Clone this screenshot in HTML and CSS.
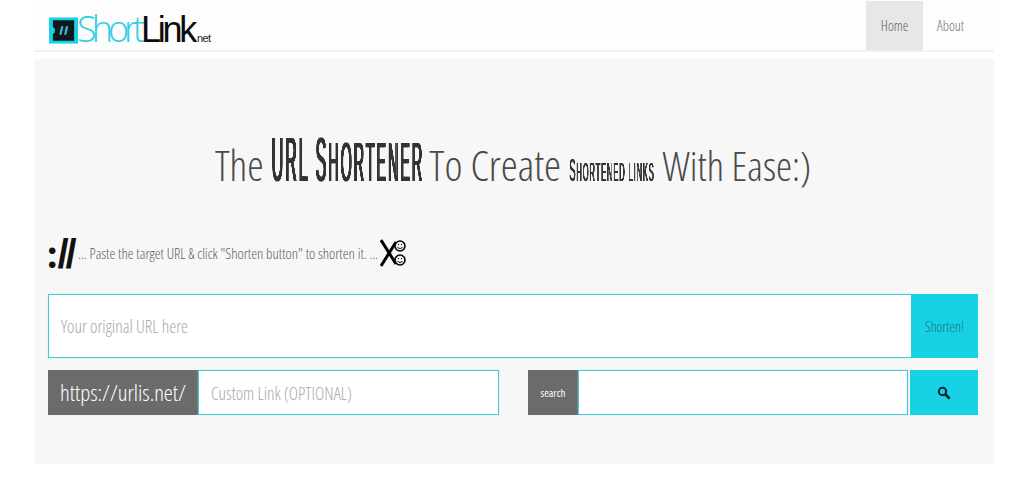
FILE: index.html
```html
<!DOCTYPE html>
<html lang="en">
<head>
<meta charset="utf-8">
<title>ShortLink.net</title>
<link rel="stylesheet" href="styles.css">
</head>
<body>
<div class="page">
  <nav class="nav">
    <a class="brand" href="#">
      <svg class="brand-mark" width="29" height="27" viewBox="0 0 30 27">
        <rect x="0" y="0" width="30" height="27" fill="#16d2e4"/>
        <path d="M4 3H26V24H4V17L6 15.500V11.500L4 10Z" fill="#10181c"/>
        <path d="M10.500 18L12.500 9H15L13 18ZM15.500 18L17.500 9H20L18 18Z" fill="#2fb6c8"/>
      </svg>
      <span class="brand-a">Short</span><span class="brand-b">Link</span><span class="brand-c">net</span>
    </a>
    <ul class="tabs">
      <li class="tab tab-on">Home</li>
      <li class="tab">About</li>
    </ul>
  </nav>
  <main class="jumbo">
    <h1 class="headline"><span class="lite">The</span> <span class="squeeze squeeze-big"><span class="tall">URL S<span class="rest-big">HORTENER</span></span></span> <span class="lite lite-mid">To Create</span> <span class="squeeze squeeze-mini"><span class="mini">S<span class="rest-mini">HORTENED LINKS</span></span></span> <span class="lite lite-end">With Ease:)</span></h1>
    <div class="hint">
      <span class="slashes"><span class="colon">:</span>//</span>
      <span class="hint-text">... Paste the target URL &amp; click "Shorten button" to shorten it. ...</span>
      <svg class="scissors" width="26" height="30" viewBox="0 0 26 30" fill="none" stroke="#000">
        <path d="M1 2L16 26" stroke-width="3"/>
        <path d="M1 28L16 4" stroke-width="3"/>
        <circle cx="20" cy="8" r="5" fill="#eee" stroke-width="1.600"/>
        <circle cx="20" cy="22" r="5" fill="#eee" stroke-width="1.600"/>
        <path d="M17.500 9C18.500 11 21.500 11 22.500 9M17.500 23C18.500 25 21.500 25 22.500 23" stroke-width="1"/>
        <path d="M18 6.500H19M21 6.500H22M18 20.500H19M21 20.500H22" stroke-width="1"/>
      </svg>
    </div>
    <form class="main-form">
      <input class="url-input" type="text" placeholder="Your original URL here">
      <button class="shorten" type="button">Shorten!</button>
    </form>
    <div class="lower">
      <div class="group group-custom">
        <span class="addon addon-url">https://urlis.net/</span>
        <input class="field" type="text" placeholder="Custom Link (OPTIONAL)">
      </div>
      <div class="group group-search">
        <span class="addon addon-search">search</span>
        <input class="field field-search" type="text">
        <button class="go" type="button" aria-label="search">
          <svg width="14" height="14" viewBox="0 0 14 14" fill="none" stroke="#04222c">
            <circle cx="5.500" cy="5.500" r="3.700" stroke-width="2"/>
            <path d="M8.500 8.500L12.700 12.700" stroke-width="2.600"/>
          </svg>
        </button>
      </div>
    </div>
  </main>
</div>
</body>
</html>
```
FILE: styles.css
```css
* { box-sizing: border-box; }
html, body { margin: 0; padding: 0; background: #fff; }
body { font-family: "Open Sans", "Liberation Sans", sans-serif; font-stretch: 75%; font-weight: 300; overflow: hidden; }
.page { width: 960px; margin-left: 34px; }
.nav { height: 52px; display: flex; justify-content: space-between; align-items: flex-end; border-bottom: 2px solid #f1f1f1; background: #fdfdfd; }
.brand { display: flex; align-items: baseline; height: 50px; padding: 15px 0 0 15px; text-decoration: none; font-family: "Liberation Sans", sans-serif; font-size: 36px; line-height: 27px; }
.brand-mark { align-self: flex-start; margin: 2px 0 0 0; }
.brand-a { color: #2ccfe2; font-family: "Open Sans", sans-serif; font-stretch: 100%; font-weight: 300; letter-spacing: -5px; margin-left: -1px; }
.brand-b { color: #0c0c0c; font-weight: 400; letter-spacing: -3.300px; margin-left: 1px; }
.brand-c { color: #222; font-size: 11px; letter-spacing: -0.600px; margin-left: 3px; }
.tabs { display: flex; list-style: none; margin: 0 16px 0 0; padding: 0; height: 49px; }
.tab { width: 55px; font-size: 14px; line-height: 49px; text-align: center; color: #707070; }
.tab-on { width: 57px; background: #e7e7e7; color: #606060; }
.jumbo { height: 405px; margin-top: 7px; padding: 0 16px 0 14px; background: #f7f7f7; }
.headline { margin: 0; padding-top: 58px; height: 174px; text-align: center; font-size: 41.500px; line-height: 80px; font-weight: 300; color: #444; white-space: nowrap; }
.lite { color: #4a4a4a; }
.lite-mid { font-size: 43px; }
.lite-end { font-size: 40.500px; }
.squeeze { display: inline-block; text-align: left; }
.squeeze-big { width: 150px; font-size: 63px; }
.squeeze-mini { width: 86px; font-size: 32px; }
.tall, .mini { display: inline-block; font-family: "Liberation Sans", sans-serif; font-stretch: normal; font-weight: 400; color: #333; transform-origin: left center; will-change: transform; }
.tall { transform: scaleX(0.254); letter-spacing: 8px; text-shadow: 5px 0 0 #333; }
.mini { transform: scaleX(0.29); letter-spacing: 3px; text-shadow: 2.500px 0 0 #333; }
.rest-big { font-size: 56px; }
.rest-mini { font-size: 26px; }
.hint { display: flex; align-items: center; height: 46px; color: #5c5c5c; margin-top: -3px; }
.slashes { font-family: "Liberation Sans", sans-serif; font-stretch: normal; font-weight: 700; font-size: 40px; line-height: 46px; color: #111; width: 30px; letter-spacing: -3px; flex: none; }
.colon { font-family: "Lato", sans-serif; font-weight: 900; letter-spacing: 0; margin-left: -1px; }
.hint-text { font-size: 14.800px; white-space: nowrap; }
.scissors { margin-left: 2px; }
.main-form { display: flex; height: 64px; margin-top: 18px; }
.url-input { flex: 1; min-width: 0; height: 64px; padding: 0 12px; border: 1px solid #45c9d9; border-right: 0; background: #fff; box-shadow: 0 0 1px #8fe3ec; font: inherit; font-size: 17.600px; outline: 0; }
.url-input::placeholder, .field::placeholder { color: #a9a9a9; opacity: 1; }
.shorten { width: 67px; height: 64px; padding: 0; border: 0; background: #16d2e4; color: #21757f; font: inherit; font-size: 14px; }
.lower { display: flex; justify-content: space-between; margin-top: 12px; }
.group { display: flex; height: 45px; }
.group-custom { width: 451px; }
.group-search { width: 450px; }
.addon { display: flex; align-items: center; justify-content: center; background: #6b6b6b; color: #fff; }
.addon-url { width: 150px; font-size: 22.800px; }
.addon-search { width: 50px; font-size: 11px; font-weight: 400; }
.field { flex: 1; min-width: 0; height: 45px; padding: 0 12px; border: 1px solid #45c9d9; background: #fff; box-shadow: 0 0 1px #8fe3ec; font: inherit; font-size: 17.600px; outline: 0; }
.go { width: 68px; height: 45px; margin-left: 2px; padding: 0; border: 0; background: #16d2e4; display: flex; align-items: center; justify-content: center; }
```
